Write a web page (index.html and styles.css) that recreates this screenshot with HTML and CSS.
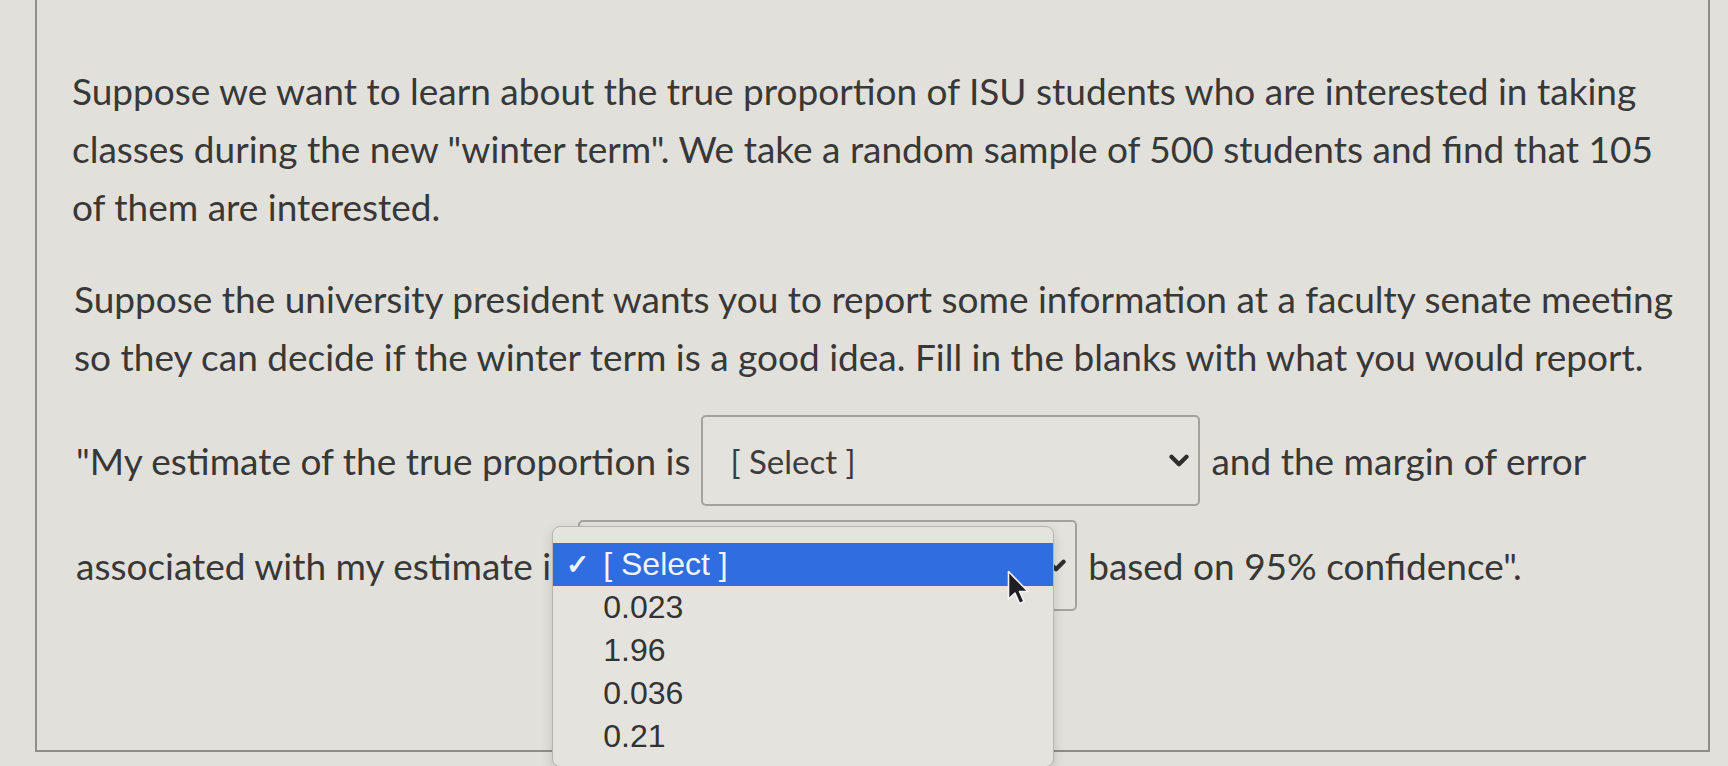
FILE: index.html
```html
<!DOCTYPE html>
<html lang="en">
<head>
<meta charset="utf-8">
<title>Question</title>
<link rel="stylesheet" href="styles.css">
</head>
<body>
<div class="card">
  <p class="para p1">Suppose we want to learn about the true proportion of ISU students who are interested in taking<br>classes during the new "winter term". We take a random sample of 500 students and find that 105<br>of them are interested.</p>
  <p class="para p2">Suppose the university president wants you to report some information at a faculty senate meeting<br>so they can decide if the winter term is a good idea. Fill in the blanks with what you would report.</p>
  <div class="fill-row row1">
    <span class="lead lead1">"My estimate of the true proportion is</span>
    <div class="select s1">
      <span class="sel-text">[ Select ]</span>
      <svg class="chev" viewBox="0 0 16 10" width="20" height="13"><path d="M2 2 L8 8 L14 2" fill="none" stroke="#2e2e2e" stroke-width="3.4" stroke-linecap="round" stroke-linejoin="round"/></svg>
    </div>
    <span class="tail">and the margin of error</span>
  </div>
  <div class="fill-row row2">
    <span class="lead lead2">associated with my estimate is</span>
    <div class="select s2">
      <span class="sel-text">[ Select ]</span>
      <svg class="chev" viewBox="0 0 16 10" width="20" height="13"><path d="M2 2 L8 8 L14 2" fill="none" stroke="#2e2e2e" stroke-width="3.4" stroke-linecap="round" stroke-linejoin="round"/></svg>
      <ul class="menu">
        <li class="opt active"><span class="check">✓</span>[ Select ]</li>
        <li class="opt">0.023</li>
        <li class="opt">1.96</li>
        <li class="opt">0.036</li>
        <li class="opt">0.21</li>
      </ul>
    </div>
    <span class="tail">based on 95% confidence".</span>
  </div>
</div>
<svg class="cursor" viewBox="0 0 22 36" width="22" height="38"><path d="M1.5 1.5 L1.5 29 L8 23 L12.5 33.5 L17 31.5 L12.5 21.5 L21 21.5 Z" fill="#1e1e24" stroke="#f4f4f4" stroke-width="1.6" stroke-linejoin="round"/></svg>
</body>
</html>
```
FILE: styles.css
```css
html, body {
  margin: 0;
  padding: 0;
}
body {
  background: #e2e0db;
  width: 1728px;
  height: 766px;
  overflow: hidden;
  position: relative;
  font-family: "Lato", "Open Sans", sans-serif;
  color: #383838;
}
.card {
  margin-left: 35px;
  width: 1675px;
  height: 752px;
  box-sizing: border-box;
  border-left: 2px solid #8e8d88;
  border-right: 2px solid #8e8d88;
  border-bottom: 2px solid #8e8d88;
  padding: 62px 0 0 35px;
}
.para {
  margin: 0;
  font-size: 37px;
  line-height: 58px;
  white-space: nowrap;
}
.p2 {
  margin-top: 34px;
  padding-left: 2px;
}
.fill-row {
  display: flex;
  align-items: center;
  gap: 11px;
  font-size: 37px;
  white-space: nowrap;
  padding-left: 4px;
}
.row1 {
  margin-top: 29px;
}
.row2 {
  margin-top: 14px;
}
.select {
  position: relative;
  width: 499px;
  height: 91px;
  box-sizing: border-box;
  border: 2px solid #a3a29d;
  border-radius: 5px;
  display: flex;
  align-items: center;
  justify-content: space-between;
  padding: 0 9px 0 27px;
  background: #e4e2dd;
}
.sel-text {
  font-size: 33px;
  color: #3c3c3c;
}
.chev {
  display: block;
}
.menu {
  position: absolute;
  left: -28px;
  top: 4px;
  width: 502px;
  margin: 0;
  padding: 16px 0 8px;
  list-style: none;
  box-sizing: border-box;
  background: #e5e3de;
  border: 1px solid #b7b6b1;
  border-radius: 8px;
  box-shadow: 0 4px 12px rgba(0, 0, 0, 0.15);
  font-family: "Liberation Sans", "Noto Sans", sans-serif;
  font-size: 32px;
  z-index: 2;
}
.opt {
  position: relative;
  height: 43px;
  line-height: 43px;
  padding-left: 50px;
  color: #333;
}
.opt.active {
  background: #2f6de0;
  color: #f2f4fa;
}
.check {
  position: absolute;
  left: 13px;
  top: 0;
  font-size: 28px;
  font-weight: bold;
}
.cursor {
  position: absolute;
  left: 1007px;
  top: 569px;
  z-index: 5;
}
```
